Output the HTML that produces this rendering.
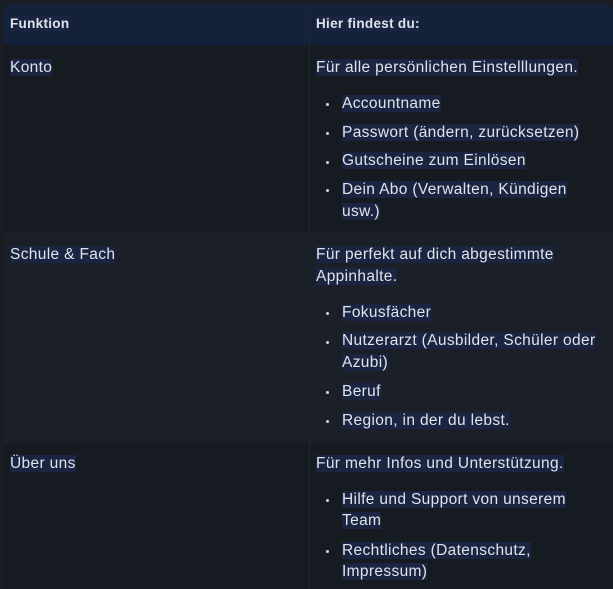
<!DOCTYPE html><html><head><style>
body{margin:0;width:613px;height:589px;background:#1a1d23;overflow:hidden;font-family:"Liberation Sans",sans-serif;color:#dfe3ea;position:relative}
.r{position:absolute;left:3px;right:0}
.t{position:absolute;font-size:15.5px;letter-spacing:0.35px;line-height:20px;white-space:nowrap;margin-top:1px}
.t span{background:#1b2542}
.h{font-weight:bold;font-size:13.5px;letter-spacing:0.3px}
.b{position:absolute;width:3px;height:3px;border-radius:50%;background:#cfd5e0;margin-top:1px}
</style></head><body>
<div class="r" style="top:4px;height:41px;background:#13223a;border-radius:6px 6px 0 0"></div>
<div class="r" style="top:45px;height:186px;background:#161b22"></div>
<div class="r" style="top:231px;height:212px;background:#1b2028"></div>
<div class="r" style="top:443px;height:146px;background:#161b22"></div>
<div style="position:absolute;left:309px;top:4px;width:1px;height:585px;background:#20262f"></div>

<div class="t h" style="left:10px;top:13px"><span>Funktion</span></div>
<div class="t h" style="left:316px;top:13px"><span>Hier findest du:</span></div>

<div class="t" style="left:10px;top:57px"><span>Konto</span></div>
<div class="t" style="left:316px;top:57px"><span>Für alle persönlichen Einstelllungen.</span></div>
<div class="b" style="left:326px;top:102px"></div><div class="t" style="left:342px;top:93px"><span>Accountname</span></div>
<div class="b" style="left:326px;top:131px"></div><div class="t" style="left:342px;top:122px"><span>Passwort (ändern, zurücksetzen)</span></div>
<div class="b" style="left:326px;top:160px"></div><div class="t" style="left:342px;top:150px"><span>Gutscheine zum Einlösen</span></div>
<div class="b" style="left:326px;top:188px"></div><div class="t" style="left:342px;top:179px"><span>Dein Abo (Verwalten, Kündigen</span></div>
<div class="t" style="left:342px;top:201px"><span>usw.)</span></div>

<div class="t" style="left:10px;top:244px"><span>Schule &amp; Fach</span></div>
<div class="t" style="left:316px;top:244px"><span>Für perfekt auf dich abgestimmte</span></div>
<div class="t" style="left:316px;top:266px"><span>Appinhalte.</span></div>
<div class="b" style="left:326px;top:311px"></div><div class="t" style="left:342px;top:302px"><span>Fokusfächer</span></div>
<div class="b" style="left:326px;top:340px"></div><div class="t" style="left:342px;top:330px"><span>Nutzerarzt (Ausbilder, Schüler oder</span></div>
<div class="t" style="left:342px;top:352px"><span>Azubi)</span></div>
<div class="b" style="left:326px;top:390px"></div><div class="t" style="left:342px;top:381px"><span>Beruf</span></div>
<div class="b" style="left:326px;top:419px"></div><div class="t" style="left:342px;top:410px"><span>Region, in der du lebst.</span></div>

<div class="t" style="left:10px;top:453px"><span>Über uns</span></div>
<div class="t" style="left:316px;top:453px"><span>Für mehr Infos und Unterstützung.</span></div>
<div class="b" style="left:326px;top:498px"></div><div class="t" style="left:342px;top:489px"><span>Hilfe und Support von unserem</span></div>
<div class="t" style="left:342px;top:510px"><span>Team</span></div>
<div class="b" style="left:326px;top:549px"></div><div class="t" style="left:342px;top:540px"><span>Rechtliches (Datenschutz,</span></div>
<div class="t" style="left:342px;top:561px"><span>Impressum)</span></div>
</body></html>
